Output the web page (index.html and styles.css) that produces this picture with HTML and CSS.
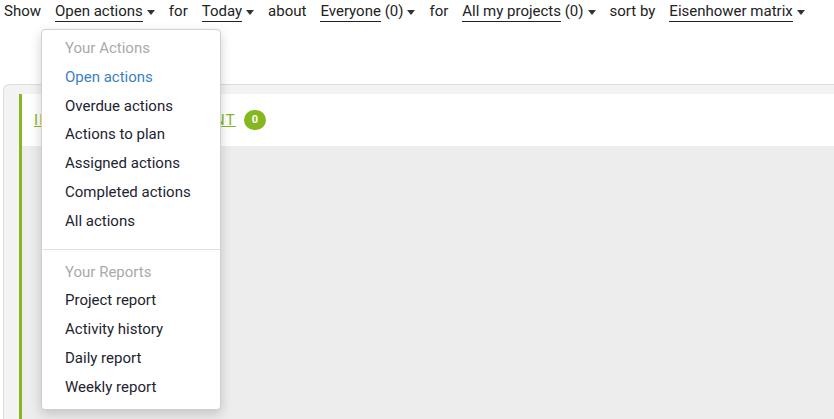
FILE: index.html
```html
<!DOCTYPE html>
<html lang="en">
<head>
    <meta charset="UTF-8">
    <title>Actions</title>
    <link rel="stylesheet" href="styles.css">
</head>
<body>
<div class="filters">
    <span class="word">Show</span>
    <span class="filter open">
        <a class="pick">Open actions</a><span class="caret"></span>
        <ul class="menu">
            <li class="menu-header">Your Actions</li>
            <li class="active">Open actions</li>
            <li>Overdue actions</li>
            <li>Actions to plan</li>
            <li>Assigned actions</li>
            <li>Completed actions</li>
            <li>All actions</li>
            <li class="divider"></li>
            <li class="menu-header">Your Reports</li>
            <li>Project report</li>
            <li>Activity history</li>
            <li>Daily report</li>
            <li>Weekly report</li>
        </ul>
    </span>
    <span class="word">for</span>
    <span class="filter"><a class="pick">Today</a><span class="caret"></span></span>
    <span class="word">about</span>
    <span class="filter"><a class="pick">Everyone</a>&nbsp;(0)<span class="caret"></span></span>
    <span class="word">for</span>
    <span class="filter"><a class="pick">All my projects</a>&nbsp;(0)<span class="caret"></span></span>
    <span class="word">sort by</span>
    <span class="filter"><a class="pick">Eisenhower matrix</a><span class="caret"></span></span>
</div>

<div class="board">
    <div class="quadrant">
        <div class="quadrant-head">
            <a class="quadrant-title">IMPORTANT AND URGENT</a>
            <span class="badge">0</span>
        </div>
        <div class="quadrant-body"></div>
    </div>
</div>
</body>
</html>
```

FILE: styles.css
```css
html, body {
    height: 100%;
}
body {
    margin: 0;
    font-family: Roboto, "Liberation Sans", sans-serif;
    font-size: 15px;
    color: #222;
    background-color: white;
    overflow: hidden;
    display: flex;
    flex-direction: column;
}
.filters {
    display: flex;
    gap: 14px;
    padding: 1px 4px 0;
    height: 25px;
    line-height: 20px;
    white-space: nowrap;
}
.filter {
    position: relative;
}
.pick {
    border-bottom: 1px solid #222;
    padding-bottom: 1px;
}
.caret {
    display: inline-block;
    margin-left: 4px;
    vertical-align: middle;
    border-top: 5px solid #333;
    border-left: 4px solid transparent;
    border-right: 4px solid transparent;
}
.menu {
    position: absolute;
    top: 28px;
    left: -14px;
    z-index: 10;
    width: 178px;
    margin: 0;
    padding: 4px 0 7px;
    list-style-type: none;
    background-color: white;
    border: 1px solid #d0d0d0;
    border-radius: 4px;
    box-shadow: 0 4px 12px rgba(0, 0, 0, 0.18);
}
.menu li {
    padding: 0 23px;
    line-height: 28.8px;
    color: #1d2330;
}
.menu .menu-header {
    color: #aaa;
}
.menu .active {
    color: #3b80c6;
}
.menu .divider {
    height: 1px;
    margin: 13px 0 8px;
    padding: 0;
    background-color: #e2e2e2;
}
.board {
    flex: 1;
    margin: 58px 0 0 3px;
    padding: 9px 0 0 15px;
    background-color: #f3f3f3;
    border: 1px solid #dcdcdc;
    border-right: none;
    border-bottom: none;
    border-radius: 6px 0 0 0;
    display: flex;
}
.quadrant {
    flex: 1;
    border-left: 3px solid #85b81e;
    background-color: #ededed;
}
.quadrant-head {
    height: 52px;
    background-color: white;
    display: flex;
    align-items: center;
    padding-left: 12px;
    gap: 8px;
}
.quadrant-title {
    color: #85b81e;
    text-decoration: underline;
    letter-spacing: 1.2px;
}
.badge {
    width: 22px;
    height: 20px;
    line-height: 20px;
    border-radius: 10px;
    background-color: #85b81e;
    color: white;
    font-size: 11px;
    font-weight: bold;
    text-align: center;
}
```
